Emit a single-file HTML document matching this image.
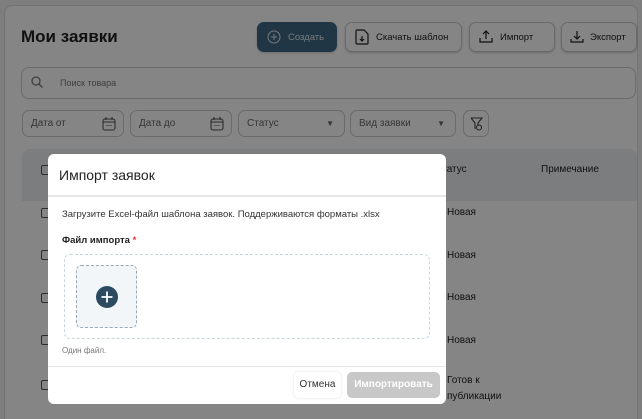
<!DOCTYPE html>
<html style="overflow:hidden;height:419px"><head><meta charset="utf-8"><style>
*{box-sizing:border-box;margin:0;padding:0}
body{width:642px;height:419px;overflow:hidden;background:#f2f2f2;font-family:"Liberation Sans",sans-serif;position:relative;color:#222}
.a{position:absolute}
.card{left:4px;top:5px;width:634px;height:414px;background:#fff;border:1px solid #ddd;border-bottom:none;border-radius:8px 8px 0 0}
.btn{top:22px;height:30px;border:1px solid #ccc;border-radius:7px;background:#fff;font-size:9.5px;display:flex;align-items:center;gap:7px;padding-left:9px;box-shadow:0 1px 2px rgba(0,0,0,.2);white-space:nowrap}
.f{top:110px;height:27px;border:1px solid #ccc;border-radius:7px;font-size:10px;color:#666;display:flex;align-items:center;padding-left:8px;background:#fff}
.cb{left:41px;width:10px;height:10px;border:1.5px solid #555;border-radius:2px}
.st{left:447px;font-size:10px}
.ov{left:0;top:0;width:642px;height:419px;background:rgba(0,0,0,.48)}
.m{left:48px;top:154px;width:398px;height:250px;background:#fff;border-radius:6px}
.cal{position:absolute;right:7px;top:5px}
</style></head><body>
<div class="a card"></div>
<div class="a" style="left:21px;top:27px;font-size:17px;font-weight:bold">Мои заявки</div>
<div class="a btn" style="left:257px;width:80px;background:#3e6985;border-color:#3e6985;color:#dfe8ee"><svg width="14" height="14" viewBox="0 0 14 14" fill="none" stroke="#dfe8ee" stroke-width="1"><circle cx="7" cy="7" r="6"/><path d="M7 4v6M4 7h6"/></svg>Создать</div>
<div class="a btn" style="left:345px;width:117px"><svg width="14" height="16" viewBox="0 0 14 16" fill="none" stroke="#222" stroke-width="1.2"><path d="M2 1h7l4 4v9a1 1 0 0 1-1 1H2a1 1 0 0 1-1-1V2a1 1 0 0 1 1-1z"/><path d="M7 7v5M5 10l2 2 2-2"/></svg>Скачать шаблон</div>
<div class="a btn" style="left:469px;width:86px"><svg width="14" height="14" viewBox="0 0 14 14" fill="none" stroke="#222" stroke-width="1.2"><path d="M7 9V1M4 4l3-3 3 3M1 8v4h12V8"/></svg>Импорт</div>
<div class="a btn" style="left:561px;width:76px;gap:6px;padding-left:8px"><svg width="14" height="14" viewBox="0 0 14 14" fill="none" stroke="#222" stroke-width="1.2"><path d="M7 1v8M4 6l3 3 3-3M1 9v3h12V9"/></svg>Экспорт</div>
<div class="a" style="left:21px;top:67px;width:615px;height:32px;border:1px solid #ccc;border-radius:8px;font-size:9px;color:#777;padding:10px 0 0 38px">Поиск товара</div>
<svg class="a" style="left:31px;top:76px" width="12" height="12" fill="none" stroke="#777" stroke-width="1.3"><circle cx="5" cy="5" r="4"/><path d="M8 8l3.5 3.5"/></svg>
<div class="a f" style="left:22px;width:102px">Дата от<svg class="cal" width="14" height="15" fill="none" stroke="#555" stroke-width="1.1"><rect x="1" y="3" width="12" height="11" rx="2"/><path d="M1 6h12M4 1v3M10 1v3M4.5 9.5h1M6.5 9.5h1M8.5 9.5h1"/></svg></div>
<div class="a f" style="left:130px;width:102px">Дата до<svg class="cal" width="14" height="15" fill="none" stroke="#555" stroke-width="1.1"><rect x="1" y="3" width="12" height="11" rx="2"/><path d="M1 6h12M4 1v3M10 1v3M4.5 9.5h1M6.5 9.5h1M8.5 9.5h1"/></svg></div>
<div class="a f" style="left:238px;width:107px">Статус<span style="position:absolute;right:10px;font-size:8px">▼</span></div>
<div class="a f" style="left:350px;width:106px">Вид заявки<span style="position:absolute;right:10px;font-size:8px">▼</span></div>
<div class="a f" style="left:463px;width:26px;padding-left:6px"><svg width="13" height="14" fill="none" stroke="#444" stroke-width="1.1"><path d="M1 1h11L8 6v3M1 1l4 5v6"/><circle cx="9" cy="10.5" r="2.5"/></svg></div>
<div class="a" style="left:22px;top:149px;width:615px;height:52px;background:#eef0f2;border-radius:8px 8px 0 0"></div>
<div class="a cb" style="top:165px"></div>
<div class="a" style="left:541px;top:164px;font-size:10px">Примечание</div>
<div class="a" style="left:435px;top:164px;font-size:10px">Статус</div>
<div class="a cb" style="top:208px"></div><div class="a st" style="top:207px">Новая</div>
<div class="a cb" style="top:250px"></div><div class="a st" style="top:250px">Новая</div>
<div class="a cb" style="top:293px"></div><div class="a st" style="top:292px">Новая</div>
<div class="a cb" style="top:335px"></div><div class="a st" style="top:335px">Новая</div>
<div class="a cb" style="top:380px"></div><div class="a st" style="top:373px;line-height:16px">Готов к<br>публикации</div>
<div class="a ov"></div>
<div class="a m">
 <div class="a" style="left:11px;top:13px;font-size:14px;color:#222">Импорт заявок</div>
 <div class="a" style="left:0;top:41px;width:398px;height:2px;background:#e6e6e6"></div>
 <div class="a" style="left:14px;top:55px;font-size:9.5px;color:#333">Загрузите Excel-файл шаблона заявок. Поддерживаются форматы .xlsx</div>
 <div class="a" style="left:14px;top:81px;font-size:9.5px;font-weight:bold;color:#222">Файл импорта <span style="color:#e33">*</span></div>
 <div class="a" style="left:16px;top:100px;width:366px;height:85px;border:1px dashed #c9d6e0;border-radius:6px"></div>
 <div class="a" style="left:28px;top:111px;width:61px;height:63px;border:1px dashed #9aa9b6;border-radius:5px;background:#f3f6f9"></div>
 <svg class="a" style="left:47px;top:131px" width="24" height="24"><circle cx="12" cy="12" r="11" fill="#2c4a60"/><path d="M12 6.5v11M6.5 12h11" stroke="#fff" stroke-width="1.8"/></svg>
 <div class="a" style="left:14px;top:192px;font-size:8px;color:#777">Один файл.</div>
 <div class="a" style="left:0;top:212px;width:398px;height:1px;background:#e6e6e6"></div>
 <div class="a" style="left:246px;top:218px;width:47px;height:26px;border-radius:5px;box-shadow:0 0 3px rgba(0,0,0,.12);font-size:10px;text-align:center;line-height:26px;color:#333">Отмена</div>
 <div class="a" style="left:299px;top:218px;width:93px;height:26px;border-radius:5px;background:#c8c8c8;font-size:10px;font-weight:bold;text-align:center;line-height:26px;color:#fff">Импортировать</div>
</div>
</body></html>
